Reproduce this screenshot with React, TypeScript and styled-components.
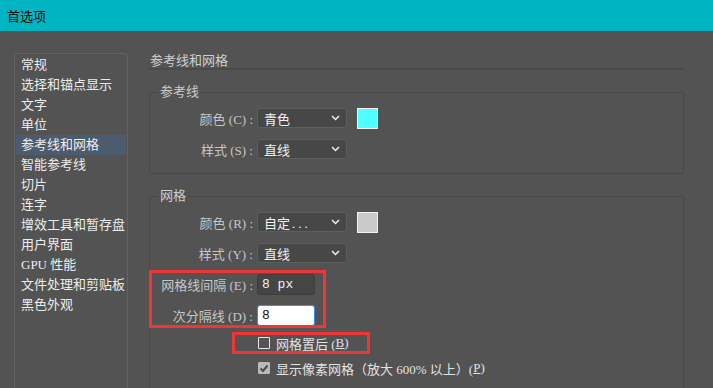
import React from "react";
import styled, { createGlobalStyle } from "styled-components";

const Global = createGlobalStyle`
  html, body { margin: 0; padding: 0; background: #535353; }
  body { font-family: "Liberation Serif", "Noto Sans CJK SC", serif; font-size: 13px; overflow: hidden; }
  * { box-sizing: border-box; }
`;

const Window = styled.div`
  width: 713px;
  height: 388px;
  background: #535353;
  display: flex;
  flex-direction: column;
  overflow: hidden;
`;

const TitleBar = styled.div`
  height: 31px;
  flex: none;
  background: #00b5c2;
  color: #0b0b0b;
  font-family: "Noto Sans CJK SC", sans-serif;
  font-size: 13px;
  display: flex;
  align-items: center;
  padding-left: 7px;
`;

const Body = styled.div`
  flex: 1;
  display: flex;
  padding: 22px 0 0 14px;
  gap: 21px;
`;

const Sidebar = styled.ul`
  list-style: none;
  margin: 0;
  padding: 1px 1px 0 1px;
  width: 114px;
  height: 360px;
  flex: none;
  border: 1px solid #626262;
  border-radius: 2px;
`;

const NavItem = styled.li<{ $active?: boolean }>`
  height: 20px;
  line-height: 20px;
  padding-left: 5px;
  color: #ececec;
  font-size: 13px;
  white-space: nowrap;
  background: ${(p) => (p.$active ? "#4c5c6f" : "transparent")};
`;

const Content = styled.div`
  width: 535px;
  display: flex;
  flex-direction: column;
`;

const Heading = styled.div`
  height: 17px;
  line-height: 15px;
  padding-left: 1px;
  color: #cfcfcf;
  font-size: 13px;
  border-bottom: 2px solid #4a4a4a;
  margin-bottom: 14px;
`;

const Group = styled.fieldset<{ $bottom: number }>`
  margin: 0 0 14px 0;
  padding: 8px 0 ${(p) => p.$bottom}px 0;
  border: 1px solid #484848;
  border-radius: 2px;
  min-width: 0;
  display: flex;
  flex-direction: column;
  gap: 11px;
`;

const Legend = styled.legend`
  margin-left: 8px;
  padding: 0 2px;
  line-height: 16px;
  color: #cbcbcb;
  font-size: 13px;
`;

const Row = styled.div`
  display: flex;
  align-items: center;
  height: 20px;
`;

const Label = styled.span`
  width: 103px;
  margin-right: 4px;
  text-align: right;
  color: #c6c6c6;
  white-space: nowrap;
`;

const Select = styled.div`
  width: 90px;
  height: 20px;
  background: #474747;
  border: 1px solid #5e5e5e;
  border-radius: 3px;
  display: flex;
  align-items: center;
  justify-content: space-between;
  padding: 0 6px 0 6px;
  color: #f2f2f2;
`;

const Dots = styled.span`
  letter-spacing: 3px;
  margin-left: 2px;
`;

const Swatch = styled.div<{ $color: string }>`
  width: 21px;
  height: 21px;
  margin-left: 10px;
  background: ${(p) => p.$color};
  border: 1px solid #f4f4f4;
`;

const Input = styled.div<{ $focused?: boolean }>`
  width: 58px;
  height: 21px;
  border-radius: 3px;
  padding-left: 4px;
  display: flex;
  align-items: center;
  font-family: "Liberation Mono", monospace;
  font-size: 13px;
  white-space: pre;
  background: ${(p) => (p.$focused ? "#ffffff" : "#454545")};
  border: 1px solid ${(p) => (p.$focused ? "#3f8fe0" : "#3e3e3e")};
  color: ${(p) => (p.$focused ? "#111" : "#f2f2f2")};
`;

const Spacing = styled.div`
  position: relative;
  display: flex;
  flex-direction: column;
  gap: 11px;
`;

const Annotation = styled.div<{ $l: number; $t: number; $w: number; $h: number }>`
  position: absolute;
  left: ${(p) => p.$l}px;
  top: ${(p) => p.$t}px;
  width: ${(p) => p.$w}px;
  height: ${(p) => p.$h}px;
  border: 3px solid #ef3535;
  pointer-events: none;
`;

const Checks = styled.div`
  display: flex;
  flex-direction: column;
  margin-top: -4px;
  gap: 3px;
`;

const CheckRow = styled.div`
  position: relative;
  height: 22px;
  display: flex;
  align-items: center;
  padding-left: 108px;
  color: #e2e2e2;
  white-space: nowrap;
`;

const Box = styled.span<{ $checked?: boolean }>`
  width: 12px;
  height: 12px;
  margin-right: 6px;
  border: 1px solid ${(p) => (p.$checked ? "#b9b9b9" : "#e6e6e6")};
  background: ${(p) => (p.$checked ? "#b9b9b9" : "transparent")};
  border-radius: 1px;
  display: flex;
  align-items: center;
  justify-content: center;
`;

const Key = styled.span`
  text-decoration: underline;
`;

const Chevron = () => (
  <svg width="9" height="6" viewBox="0 0 9 6">
    <path d="M1 1l3.5 3.5L8 1" fill="none" stroke="#f0f0f0" strokeWidth="1.5" />
  </svg>
);

const Tick = () => (
  <svg width="10" height="9" viewBox="0 0 10 9">
    <path d="M1.5 4.5l2.5 2.5 4.5-5.5" fill="none" stroke="#4a4a4a" strokeWidth="2" />
  </svg>
);

const nav = [
  "常规",
  "选择和锚点显示",
  "文字",
  "单位",
  "参考线和网格",
  "智能参考线",
  "切片",
  "连字",
  "增效工具和暂存盘",
  "用户界面",
  "GPU 性能",
  "文件处理和剪贴板",
  "黑色外观",
];

export default function App() {
  return (
    <Window>
      <Global />
      <TitleBar>首选项</TitleBar>
      <Body>
        <Sidebar>
          {nav.map((n) => (
            <NavItem key={n} $active={n === "参考线和网格"}>
              {n}
            </NavItem>
          ))}
        </Sidebar>
        <Content>
          <Heading>参考线和网格</Heading>
          <Group $bottom={14}>
            <Legend>参考线</Legend>
            <Row>
              <Label>颜色 (C) :</Label>
              <Select>
                青色
                <Chevron />
              </Select>
              <Swatch $color="#4dffff" />
            </Row>
            <Row>
              <Label>样式 (S) :</Label>
              <Select>
                直线
                <Chevron />
              </Select>
            </Row>
          </Group>
          <Group $bottom={30}>
            <Legend>网格</Legend>
            <Row>
              <Label>颜色 (R) :</Label>
              <Select>
                <span>
                  自定<Dots>...</Dots>
                </span>
                <Chevron />
              </Select>
              <Swatch $color="#cacaca" />
            </Row>
            <Row>
              <Label>样式 (Y) :</Label>
              <Select>
                直线
                <Chevron />
              </Select>
            </Row>
            <Spacing>
              <Row>
                <Label>网格线间隔 (E) :</Label>
                <Input>8 px</Input>
              </Row>
              <Row>
                <Label>次分隔线 (D) :</Label>
                <Input $focused>8</Input>
              </Row>
              <Annotation $l={-1} $t={-4} $w={177} $h={58} />
            </Spacing>
            <Checks>
              <CheckRow>
                <Box />
                网格置后 (<Key>B</Key>)
                <Annotation $l={82} $t={0} $w={138} $h={22} />
              </CheckRow>
              <CheckRow>
                <Box $checked>
                  <Tick />
                </Box>
                显示像素网格（放大 600% 以上）(<Key>P</Key>)
              </CheckRow>
            </Checks>
          </Group>
        </Content>
      </Body>
    </Window>
  );
}
